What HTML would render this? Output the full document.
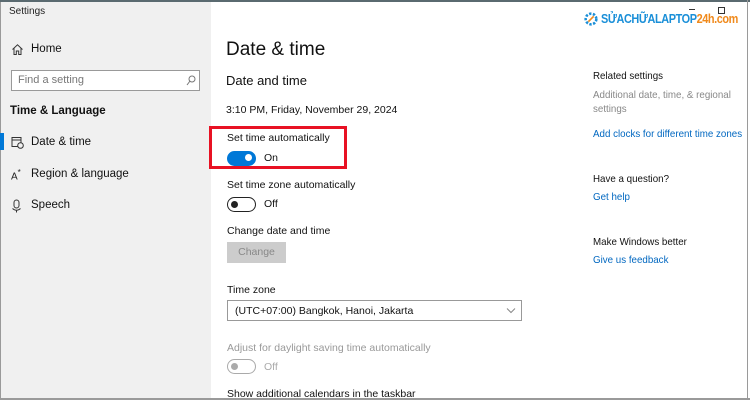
<!DOCTYPE html>
<html><head><meta charset="utf-8"><style>
*{margin:0;padding:0;box-sizing:border-box}
body{width:750px;height:400px;overflow:hidden;background:#fff;font-family:"Liberation Sans","DejaVu Sans",sans-serif;color:#000;position:relative}
.a{position:absolute;white-space:nowrap}
#side{position:absolute;left:0;top:0;width:211px;height:400px;background:#f0f0f0;border-left:1px solid #9a9a9a}
#topline{position:absolute;left:0;top:0;width:750px;height:2px;background:#5a6a70}
#rline{position:absolute;left:747px;top:0;width:1px;height:400px;background:#9a9a9a}
#bline{position:absolute;left:0;top:398px;width:750px;height:2px;background:#9a9a9a}
.tog{position:absolute;width:29px;height:15px;border-radius:8px}
.tog i{position:absolute;top:3px;width:7px;height:7px;border-radius:50%}
.link{color:#0067c0}
.r{font-size:10.5px;transform:scaleX(0.93);transform-origin:left}
</style></head><body>
<div id="side"></div>
<div id="topline"></div>
<div id="rline"></div>
<div id="bline"></div>

<div class="a" style="left:9px;top:6px;font-size:10px;color:#222">Settings</div>

<svg class="a" style="left:11px;top:43px" width="13" height="13" viewBox="0 0 13 13"><path d="M1.5 6.5 L6.5 1.8 L11.5 6.5 M3 5.2 V11.5 H5.3 V8 H7.7 V11.5 H10 V5.2" fill="none" stroke="#333" stroke-width="1"/></svg>
<div class="a" style="left:31px;top:43px;font-size:11.5px;color:#111">Home</div>

<div class="a" style="left:11px;top:70px;width:189px;height:21px;border:1px solid #999;background:#fff"></div>
<div class="a" style="left:18px;top:74px;font-size:11px;color:#777">Find a setting</div>
<svg class="a" style="left:186px;top:75px" width="10" height="11" viewBox="0 0 10 11"><circle cx="6" cy="4" r="3" fill="none" stroke="#777"/><path d="M4 6 L1 10" stroke="#777"/></svg>

<div class="a" style="left:10px;top:105px;font-size:11.5px;font-weight:bold;color:#111">Time &amp; Language</div>

<div class="a" style="left:0;top:133px;width:4px;height:17px;background:#0078d7"></div>
<svg class="a" style="left:11px;top:136px" width="13" height="13" viewBox="0 0 13 13"><rect x="1" y="1.5" width="9" height="9" fill="none" stroke="#333"/><path d="M1 4 H10" stroke="#333"/><circle cx="9.5" cy="9.5" r="2.8" fill="#f0f0f0" stroke="#333"/></svg>
<div class="a" style="left:31px;top:136px;font-size:11.5px;color:#111">Date &amp; time</div>

<div class="a" style="left:11px;top:168px;font-size:10px;color:#222">A<sup style="font-size:8px">*</sup></div>
<div class="a" style="left:31px;top:168px;font-size:11.5px;color:#111">Region &amp; language</div>

<svg class="a" style="left:11px;top:199px" width="11" height="14" viewBox="0 0 11 14"><rect x="3" y="1" width="5" height="8" rx="2.5" fill="none" stroke="#333"/><path d="M1.5 9.5 Q5.5 13 9.5 9.5 M5.5 11 V13.5" fill="none" stroke="#333"/></svg>
<div class="a" style="left:31px;top:199px;font-size:11.5px;color:#111">Speech</div>

<div class="a" style="left:226px;top:39px;font-size:19px;color:#111">Date &amp; time</div>
<div class="a" style="left:226px;top:73px;font-size:13px;color:#111">Date and time</div>
<div class="a" style="left:226px;top:104px;font-size:10.5px;color:#111">3:10 PM, Friday, November 29, 2024</div>

<div class="a" style="left:209px;top:126px;width:138px;height:43px;border:3px solid #e81123"></div>
<div class="a" style="left:227px;top:132px;font-size:10.5px;color:#111">Set time automatically</div>
<div class="tog" style="left:227px;top:151px;background:#0078d7"><i style="left:18px;background:#fff"></i></div>
<div class="a" style="left:264px;top:152px;font-size:10.5px;color:#111">On</div>

<div class="a" style="left:227px;top:179px;font-size:10.5px;color:#111">Set time zone automatically</div>
<div class="tog" style="left:227px;top:197px;border:1.5px solid #222"><i style="left:3px;top:2.5px;background:#222"></i></div>
<div class="a" style="left:264px;top:198px;font-size:10.5px;color:#111">Off</div>

<div class="a" style="left:227px;top:225px;font-size:10.5px;color:#111">Change date and time</div>
<div class="a" style="left:227px;top:242px;width:59px;height:21px;background:#ccc;color:#888;font-size:10.5px;text-align:center;line-height:21px">Change</div>

<div class="a" style="left:227px;top:284px;font-size:10.5px;color:#111">Time zone</div>
<div class="a" style="left:227px;top:300px;width:295px;height:21px;border:1px solid #999"></div>
<div class="a" style="left:235px;top:305px;font-size:10.5px;color:#111">(UTC+07:00) Bangkok, Hanoi, Jakarta</div>
<svg class="a" style="left:506px;top:307px" width="10" height="7" viewBox="0 0 10 7"><path d="M1 1.5 L5 5.5 L9 1.5" fill="none" stroke="#888"/></svg>

<div class="a" style="left:227px;top:342px;font-size:10.5px;color:#999">Adjust for daylight saving time automatically</div>
<div class="tog" style="left:227px;top:359px;border:1.5px solid #aaa"><i style="left:3px;top:2.5px;background:#aaa"></i></div>
<div class="a" style="left:264px;top:361px;font-size:10.5px;color:#aaa">Off</div>

<div class="a" style="left:227px;top:388px;font-size:10.5px;color:#111">Show additional calendars in the taskbar</div>

<svg class="a" style="left:583px;top:11px" width="16" height="16" viewBox="0 0 15 15"><circle cx="7.5" cy="7.5" r="5" fill="none" stroke="#1a8fd8" stroke-width="2.4" stroke-dasharray="2.2 1.4"/><path d="M5 10 L10 5" stroke="#f08a1c" stroke-width="1.6"/></svg>
<div class="a" style="left:601px;top:11px;font-size:13px;font-weight:bold;letter-spacing:-0.5px;transform:scaleX(0.84);transform-origin:left"><span style="color:#1a8fd8">SỬACHỮALAPTOP</span><span style="color:#f08a1c">24h.com</span></div>
<div class="a" style="left:689px;top:9px;width:6px;height:1px;background:#333"></div>
<div class="a" style="left:718px;top:7px;width:7px;height:7px;border:1px solid #333"></div>

<div class="a r" style="left:593px;top:70px;color:#111">Related settings</div>
<div class="a r" style="left:593px;top:88px;color:#888;line-height:14px">Additional date, time, &amp; regional<br>settings</div>
<div class="a r link" style="left:593px;top:128px">Add clocks for different time zones</div>
<div class="a r" style="left:593px;top:173px;color:#111">Have a question?</div>
<div class="a r link" style="left:593px;top:191px">Get help</div>
<div class="a r" style="left:593px;top:236px;color:#111">Make Windows better</div>
<div class="a r link" style="left:593px;top:254px">Give us feedback</div>
</body></html>
